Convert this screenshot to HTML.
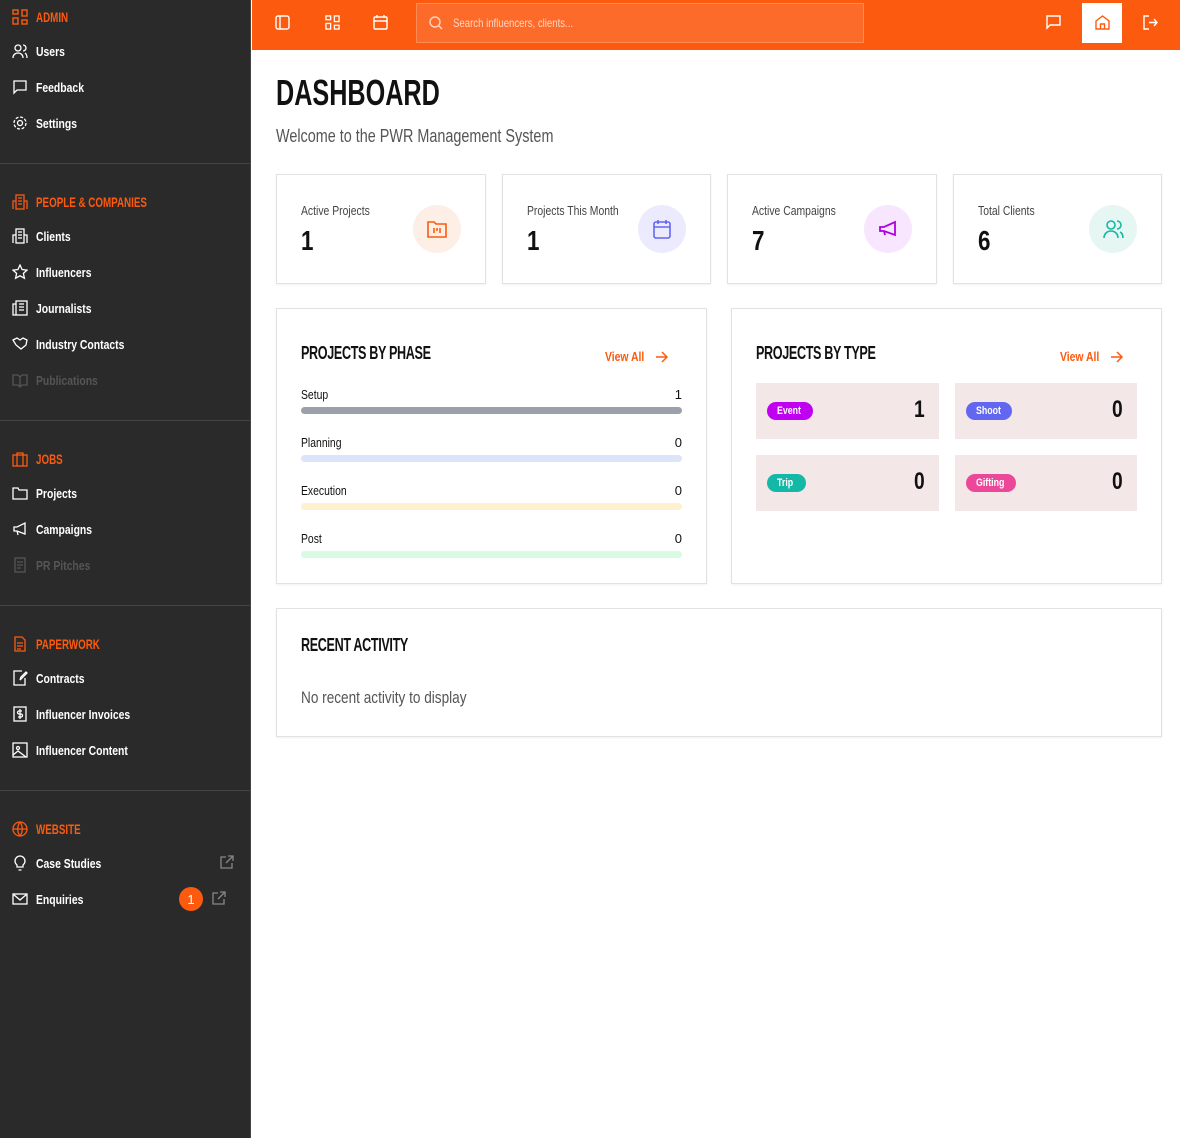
<!DOCTYPE html>
<html><head><meta charset="utf-8"><style>
*{box-sizing:border-box;margin:0;padding:0}
body{width:1180px;height:1138px;position:relative;font-family:"Liberation Sans",sans-serif;background:#fff;overflow:hidden;color:#111}
.s7{display:inline-block;transform:scaleX(.7);transform-origin:0 50%;white-space:nowrap}
.s8{display:inline-block;transform:scaleX(.8);transform-origin:0 50%;white-space:nowrap}
.sb{position:absolute;left:0;top:0;width:251px;height:1138px;background:#2a2a2a;border-right:1px solid #444}
.h{position:absolute;left:12px;color:#fc5a0e;font-weight:bold;font-size:14px;display:flex;align-items:center;gap:8px}
.it{position:absolute;left:12px;color:#fff;font-weight:bold;font-size:13px;display:flex;align-items:center;gap:8px}
.it.dim{color:#555}
.dv{position:absolute;left:0;width:251px;border-top:1px solid #444}
svg{flex:none}
.top{position:absolute;left:252px;top:0;width:928px;height:50px;background:#fc5a0e}
.srch{position:absolute;left:164px;top:3px;width:448px;height:40px;background:#fd6b2b;border:1px solid #ff8c55;color:#ffd6c0;font-size:12px;display:flex;align-items:center;padding-left:12px;gap:10px}
.ti{position:absolute;top:15px}
.card{position:absolute;top:174px;height:110px;border:1px solid #e2e2e2;box-shadow:0 1px 2px rgba(0,0,0,.06)}
.card .l{position:absolute;left:24px;top:28px;font-size:13px;color:#444}
.card .v{position:absolute;left:24px;top:50px;font-size:28px;font-weight:bold}
.card .c{position:absolute;right:24px;top:30px;width:48px;height:48px;border-radius:50%;display:flex;align-items:center;justify-content:center}
.pn{position:absolute;border:1px solid #e2e2e2;box-shadow:0 1px 2px rgba(0,0,0,.06)}
.pt{position:absolute;left:24px;top:34px;font-size:18px;font-weight:bold;letter-spacing:-.5px}
.va{position:absolute;top:40px;color:#fc5a0e;font-size:13px;font-weight:bold;display:flex;align-items:center}
.ph{position:absolute;left:24px;right:24px;font-size:13px}
.ph .n{position:absolute;right:0;top:0}
.ph .b{position:absolute;left:0;right:0;top:20px;height:7px;border-radius:4px}
.tt{position:absolute;width:183px;height:56px;background:#f3e7e7}
.tt .bd{position:absolute;left:11px;top:19px;color:#fff;font-size:11px;font-weight:bold;height:18px;width:46px;border-radius:10px;padding-left:10px;line-height:18px}
.tt .n{position:absolute;right:12px;top:13px;font-size:24px;font-weight:bold}
</style></head><body>
<div class="sb">
<div class="h" style="top:9px"><svg width="16" height="16" viewBox="0 0 16 16" fill="none" stroke="#fc5a0e" stroke-width="1.4"><rect x="1" y="1" width="5" height="4"/><rect x="10" y="1" width="5" height="6"/><rect x="1" y="9" width="5" height="6"/><rect x="10" y="11" width="5" height="4"/></svg><span class="s7">ADMIN</span></div>
<div class="it" style="top:43px"><svg width="16" height="16" viewBox="0 0 16 16" fill="none" stroke="#fff" stroke-width="1.3"><circle cx="6" cy="5" r="3"/><path d="M1 15c0-3 2-5 5-5s5 2 5 5M11 2a3 3 0 010 6M13 10c1.5 1 2 3 2 5"/></svg><span class="s8">Users</span></div>
<div class="it" style="top:79px"><svg width="16" height="16" viewBox="0 0 16 16" fill="none" stroke="#fff" stroke-width="1.3"><path d="M2 2h12v9H5l-3 3z"/></svg><span class="s8">Feedback</span></div>
<div class="it" style="top:115px"><svg width="16" height="16" viewBox="0 0 16 16" fill="none" stroke="#fff" stroke-width="1.3"><circle cx="8" cy="8" r="2.5"/><circle cx="8" cy="8" r="6" stroke-dasharray="3 1.7"/></svg><span class="s8">Settings</span></div>
<div class="dv" style="top:163px"></div>
<div class="h" style="top:194px"><svg width="16" height="16" viewBox="0 0 16 16" fill="none" stroke="#fc5a0e" stroke-width="1.3"><rect x="4" y="1" width="8" height="14"/><path d="M1 15V7h3M15 15V7h-3M6 4h4M6 7h4M6 10h4"/></svg><span class="s7">PEOPLE &amp; COMPANIES</span></div>
<div class="it" style="top:228px"><svg width="16" height="16" viewBox="0 0 16 16" fill="none" stroke="#fff" stroke-width="1.3"><rect x="4" y="1" width="8" height="14"/><path d="M1 15V7h3M15 15V7h-3M6 4h4M6 7h4M6 10h4"/></svg><span class="s8">Clients</span></div>
<div class="it" style="top:264px"><svg width="16" height="16" viewBox="0 0 16 16" fill="none" stroke="#fff" stroke-width="1.3"><path d="M8 1l2.1 4.5 4.9.6-3.6 3.3 1 4.8L8 11.8 3.6 14.2l1-4.8L1 6.1l4.9-.6z"/></svg><span class="s8">Influencers</span></div>
<div class="it" style="top:300px"><svg width="16" height="16" viewBox="0 0 16 16" fill="none" stroke="#fff" stroke-width="1.3"><rect x="4" y="1" width="11" height="14"/><path d="M4 4H1v11h3M7 4h5M7 7h5M7 10h5"/></svg><span class="s8">Journalists</span></div>
<div class="it" style="top:336px"><svg width="16" height="16" viewBox="0 0 16 16" fill="none" stroke="#fff" stroke-width="1.3"><path d="M1 4l4-2 3 2 3-2 4 2-1 5-5 4-5-4z"/></svg><span class="s8">Industry Contacts</span></div>
<div class="it dim" style="top:372px"><svg width="16" height="16" viewBox="0 0 16 16" fill="none" stroke="#555" stroke-width="1.3"><path d="M1 3h5l2 2 2-2h5v10h-5l-2 2-2-2H1zM8 5v10"/></svg><span class="s8">Publications</span></div>
<div class="dv" style="top:420px"></div>
<div class="h" style="top:451px"><svg width="16" height="16" viewBox="0 0 16 16" fill="none" stroke="#fc5a0e" stroke-width="1.3"><rect x="1" y="4" width="14" height="11"/><path d="M5 4V2h6v2M5 4v11M11 4v11"/></svg><span class="s7">JOBS</span></div>
<div class="it" style="top:485px"><svg width="16" height="16" viewBox="0 0 16 16" fill="none" stroke="#fff" stroke-width="1.3"><path d="M1 3h5l1 2h8v9H1z"/></svg><span class="s8">Projects</span></div>
<div class="it" style="top:521px"><svg width="16" height="16" viewBox="0 0 16 16" fill="none" stroke="#fff" stroke-width="1.3"><path d="M2 6h3l8-4v11l-8-3H2zM5 10l1 4"/></svg><span class="s8">Campaigns</span></div>
<div class="it dim" style="top:557px"><svg width="16" height="16" viewBox="0 0 16 16" fill="none" stroke="#555" stroke-width="1.3"><rect x="3" y="1" width="10" height="14"/><path d="M5 5h6M5 8h6M5 11h4"/></svg><span class="s8">PR Pitches</span></div>
<div class="dv" style="top:605px"></div>
<div class="h" style="top:636px"><svg width="16" height="16" viewBox="0 0 16 16" fill="none" stroke="#fc5a0e" stroke-width="1.3"><path d="M3 1h7l3 3v11H3zM5 7h6M5 10h6M5 13h4"/></svg><span class="s7">PAPERWORK</span></div>
<div class="it" style="top:670px"><svg width="16" height="16" viewBox="0 0 16 16" fill="none" stroke="#fff" stroke-width="1.3"><path d="M13 8v7H2V1h8M8 10l1-3 5-5 1 1-5 5z"/></svg><span class="s8">Contracts</span></div>
<div class="it" style="top:706px"><svg width="16" height="16" viewBox="0 0 16 16" fill="none" stroke="#fff" stroke-width="1.3"><rect x="2" y="1" width="12" height="14"/><path d="M8 3v10M10 5H7a1.5 1.5 0 000 3h2a1.5 1.5 0 010 3H6"/></svg><span class="s8">Influencer Invoices</span></div>
<div class="it" style="top:742px"><svg width="16" height="16" viewBox="0 0 16 16" fill="none" stroke="#fff" stroke-width="1.3"><rect x="1" y="1" width="14" height="14"/><circle cx="6" cy="6" r="1.5"/><path d="M1 13l5-4 8 6"/></svg><span class="s8">Influencer Content</span></div>
<div class="dv" style="top:790px"></div>
<div class="h" style="top:821px"><svg width="16" height="16" viewBox="0 0 16 16" fill="none" stroke="#fc5a0e" stroke-width="1.3"><circle cx="8" cy="8" r="7"/><path d="M1 8h14M8 1c-3 4-3 10 0 14M8 1c3 4 3 10 0 14"/></svg><span class="s7">WEBSITE</span></div>
<div class="it" style="top:855px"><svg width="16" height="16" viewBox="0 0 16 16" fill="none" stroke="#fff" stroke-width="1.3"><path d="M6 12h4M6.5 15h3M5 10a5 5 0 116 0v2H5z"/></svg><span class="s8">Case Studies</span></div>
<svg style="position:absolute;left:220px;top:855px" width="14" height="14" viewBox="0 0 14 14" fill="none" stroke="#888" stroke-width="1.3"><path d="M6 2H1v11h11V8M8 1h5v5M13 1L6 8"/></svg>
<div class="it" style="top:891px"><svg width="16" height="16" viewBox="0 0 16 16" fill="none" stroke="#fff" stroke-width="1.3"><rect x="1" y="3" width="14" height="10"/><path d="M1 3l7 6 7-6"/></svg><span class="s8">Enquiries</span></div>
<div style="position:absolute;left:179px;top:887px;width:24px;height:24px;border-radius:50%;background:#fc5a0e;color:#fff;font-size:13px;display:flex;align-items:center;justify-content:center">1</div>
<svg style="position:absolute;left:212px;top:891px" width="14" height="14" viewBox="0 0 14 14" fill="none" stroke="#888" stroke-width="1.3"><path d="M6 2H1v11h11V8M8 1h5v5M13 1L6 8"/></svg>
</div>

<div class="top">
<svg class="ti" style="left:23px" width="15" height="15" viewBox="0 0 15 15" fill="none" stroke="#fff" stroke-width="1.4"><rect x="1" y="1" width="13" height="13" rx="2"/><path d="M5 1v13"/></svg>
<svg class="ti" style="left:73px" width="15" height="15" viewBox="0 0 16 16" fill="none" stroke="#fff" stroke-width="1.4"><rect x="1" y="1" width="5" height="4"/><rect x="10" y="1" width="5" height="6"/><rect x="1" y="9" width="5" height="6"/><rect x="10" y="11" width="5" height="4"/></svg>
<svg class="ti" style="left:121px" width="15" height="15" viewBox="0 0 15 15" fill="none" stroke="#fff" stroke-width="1.4"><rect x="1" y="2" width="13" height="12" rx="1"/><path d="M1 6h13M4 0v3M11 0v3"/></svg>
<div class="srch"><svg width="14" height="14" viewBox="0 0 14 14" fill="none" stroke="#ffd6c0" stroke-width="1.4"><circle cx="6" cy="6" r="5"/><path d="M10 10l3 3"/></svg><span class="s8">Search influencers, clients...</span></div>
<svg class="ti" style="left:794px" width="15" height="15" viewBox="0 0 15 15" fill="none" stroke="#fff" stroke-width="1.4"><path d="M1 1h13v9H4l-3 3z"/></svg>
<div style="position:absolute;left:830px;top:3px;width:40px;height:40px;background:#fff"></div>
<svg class="ti" style="left:843px" width="15" height="15" viewBox="0 0 15 15" fill="none" stroke="#fc5a0e" stroke-width="1.4"><path d="M1 6l6.5-5L14 6v8H1zM5.5 14V9h4v5"/></svg>
<svg class="ti" style="left:891px" width="15" height="15" viewBox="0 0 15 15" fill="none" stroke="#fff" stroke-width="1.4"><path d="M6 1H1v13h5M6 7.5h8M11 4l3 3.5-3 3.5"/></svg>
</div>

<div style="position:absolute;left:276px;top:72px;font-size:36px;font-weight:bold"><span class="s7">DASHBOARD</span></div>
<div style="position:absolute;left:276px;top:126px;font-size:18px;color:#555"><span class="s8">Welcome to the PWR Management System</span></div>

<div class="card" style="left:276px;width:210px"><div class="l"><span class="s8">Active Projects</span></div><div class="v"><span class="s8">1</span></div><div class="c" style="background:#fdeee6"><svg width="22" height="22" viewBox="0 0 22 22" fill="none" stroke="#fc5a0e" stroke-width="1.6"><path d="M2 4h6l2 2h10v13H2zM8 10v5M11 10v3M14 10v5"/></svg></div></div>
<div class="card" style="left:502px;width:209px"><div class="l"><span class="s8">Projects This Month</span></div><div class="v"><span class="s8">1</span></div><div class="c" style="background:#ecebfd"><svg width="22" height="22" viewBox="0 0 22 22" fill="none" stroke="#6366f1" stroke-width="1.6"><rect x="3" y="4" width="16" height="16" rx="2"/><path d="M3 9h16M7 2v4M15 2v4"/></svg></div></div>
<div class="card" style="left:727px;width:210px"><div class="l"><span class="s8">Active Campaigns</span></div><div class="v"><span class="s8">7</span></div><div class="c" style="background:#f7e6fd"><svg width="22" height="22" viewBox="0 0 22 22" fill="none" stroke="#b000e0" stroke-width="1.8"><path d="M3 9h4l11-5v13L7 13H3zM7 13l1 4"/></svg></div></div>
<div class="card" style="left:953px;width:209px"><div class="l"><span class="s8">Total Clients</span></div><div class="v"><span class="s8">6</span></div><div class="c" style="background:#e5f6f3"><svg width="22" height="22" viewBox="0 0 22 22" fill="none" stroke="#14b8a6" stroke-width="1.6"><circle cx="9" cy="7" r="4"/><path d="M2 20c0-4 3-7 7-7s7 3 7 7M15 3a4 4 0 010 8M18 14c2 1 3 3 3 6"/></svg></div></div>

<div class="pn" style="left:276px;top:308px;width:431px;height:276px">
<div class="pt"><span class="s7">PROJECTS BY PHASE</span></div>
<div class="va" style="left:328px"><span class="s8">View All</span><svg style="position:absolute;left:50px" width="14" height="12" viewBox="0 0 14 12" fill="none" stroke="#fc5a0e" stroke-width="1.5"><path d="M1 6h11M7 1l5 5-5 5"/></svg></div>
<div class="ph" style="top:78px"><span class="s8">Setup</span><span class="n">1</span><div class="b" style="background:#9ca0ab"></div></div>
<div class="ph" style="top:126px"><span class="s8">Planning</span><span class="n">0</span><div class="b" style="background:#dde3f8"></div></div>
<div class="ph" style="top:174px"><span class="s8">Execution</span><span class="n">0</span><div class="b" style="background:#fdf1d0"></div></div>
<div class="ph" style="top:222px"><span class="s8">Post</span><span class="n">0</span><div class="b" style="background:#d9fbe3"></div></div>
</div>
<div class="pn" style="left:731px;top:308px;width:431px;height:276px">
<div class="pt"><span class="s7">PROJECTS BY TYPE</span></div>
<div class="va" style="left:328px"><span class="s8">View All</span><svg style="position:absolute;left:50px" width="14" height="12" viewBox="0 0 14 12" fill="none" stroke="#fc5a0e" stroke-width="1.5"><path d="M1 6h11M7 1l5 5-5 5"/></svg></div>
<div class="tt" style="left:24px;top:74px"><span class="bd" style="background:#c000f0"><span class="s8">Event</span></span><span class="n"><span class="s8">1</span></span></div>
<div class="tt" style="left:223px;top:74px;width:182px"><span class="bd" style="background:#6366f1"><span class="s8">Shoot</span></span><span class="n"><span class="s8">0</span></span></div>
<div class="tt" style="left:24px;top:146px"><span class="bd" style="background:#14b8a6;width:39px"><span class="s8">Trip</span></span><span class="n"><span class="s8">0</span></span></div>
<div class="tt" style="left:223px;top:146px;width:182px"><span class="bd" style="background:#ec4899;width:50px"><span class="s8">Gifting</span></span><span class="n"><span class="s8">0</span></span></div>
</div>
<div class="pn" style="left:276px;top:608px;width:886px;height:129px">
<div class="pt" style="top:26px"><span class="s7">RECENT ACTIVITY</span></div>
<div style="position:absolute;left:24px;top:79px;font-size:17px;color:#555"><span class="s8">No recent activity to display</span></div>
</div>
</body></html>
